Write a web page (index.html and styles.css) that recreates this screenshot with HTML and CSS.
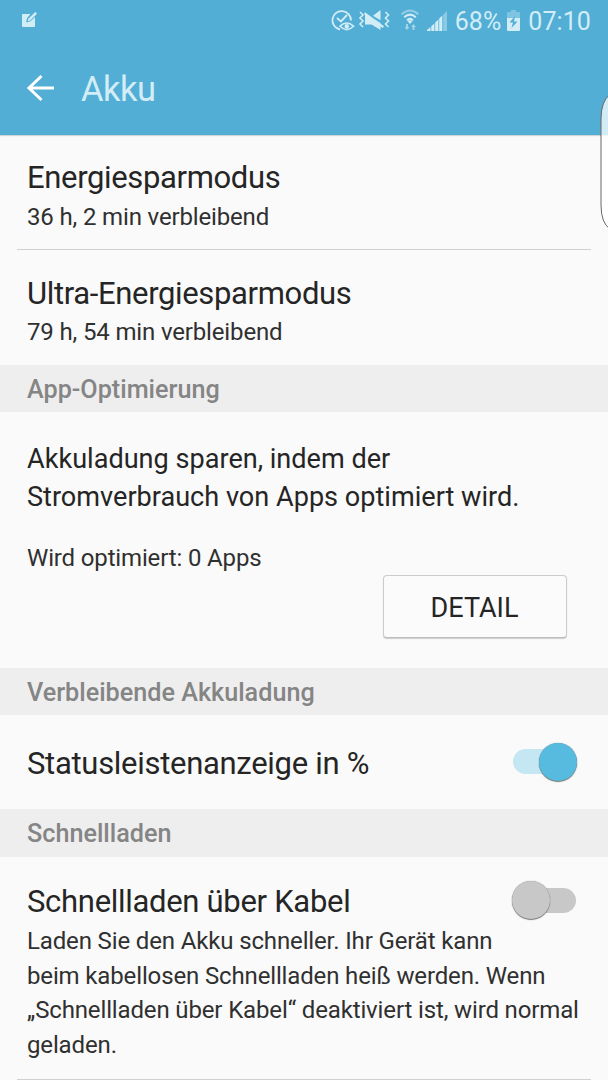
FILE: index.html
```html
<!DOCTYPE html>
<html lang="de">
<head>
<meta charset="utf-8">
<title>Akku</title>
<link rel="stylesheet" href="styles.css">
</head>
<body>
<div class="screen">
  <header class="header">
    <div class="statusbar">
      <svg class="note-icon" width="17" height="17" viewBox="0 0 17 17">
        <path d="M2 2H9.5L6.2 6L5 10.5L9.5 9.3L14 5V14Q14 15 13 15H2Q1 15 1 14V3Q1 2 2 2Z" fill="currentColor"/>
        <path d="M6.7 9.2L7.4 6.7L14.2 0L16 1.8L9.2 8.5Z" fill="currentColor"/>
      </svg>
      <div class="status-right">
        <svg class="status-icons" width="124" height="26" viewBox="328 8 124 26">
          <g fill="none" stroke="currentColor">
            <path d="M340 29.5A9.3 9.3 0 1 1 351 20.5" stroke-width="1.8"/>
            <path d="M337 18L341 21.5L347 15" stroke-width="1.9"/>
            <path d="M340 26.2Q346.8 19.8 353.5 26.2Q346.8 33 340 26.2Z" stroke-width="1.6"/>
            <path d="M360 12L363 15L360 18L363 21L360 24L363 27M385.5 12L388.5 15L385.5 18L388.5 21L385.5 24L388.5 27" stroke-width="1.6"/>
          </g>
          <circle cx="346.8" cy="26.3" r="2.2" fill="currentColor"/>
          <path d="M373 15.8L380.5 10V20.2ZM365 15H368L380.5 23V30L371.5 24.5H365ZM365 12.3L384 26.2L382.8 28L364 14.2Z" fill="currentColor"/>
          <g fill="none" stroke="currentColor" stroke-width="2">
            <path d="M401.5 14.3Q410 6.6 418.5 14.3" opacity=".5"/>
            <path d="M404.2 17.2Q410 12 415.8 17.2M407 20.2Q410 17.5 413 20.2"/>
          </g>
          <path d="M407.5 21L410 24L412.5 21Q410 19.5 407.5 21Z" fill="currentColor"/>
          <path d="M406 24H408V27H409.5L407 30L404.5 27H406ZM412.5 30V27H411L413.5 24L416 27H414.5V30Z" fill="currentColor" opacity=".6"/>
          <path d="M427 31V30L430.5 27V31ZM431.3 31V26.3L434.4 23.5V31ZM435.2 31V22.5L438.4 19.5V31ZM439.2 31V18.5L442.3 15.5V31Z" fill="currentColor"/>
          <path d="M443.2 31V14.7L447 11V31Z" fill="currentColor" opacity=".45"/>
        </svg>
        <span class="percent">68%</span>
        <svg class="battery" width="13" height="21" viewBox="0 0 13 21">
          <path d="M4 0H9V2H12Q13 2 13 3V8H0V3Q0 2 1 2H4Z" fill="currentColor" opacity=".35"/>
          <path d="M0 8H13V20Q13 21 12 21H1Q0 21 0 20Z" fill="currentColor"/>
          <path d="M8 6L2.5 12.5H6L4.5 18L10.5 11.5H7Z" fill="#52aed5"/>
        </svg>
        <span class="clock">07:10</span>
      </div>
    </div>
    <div class="titlebar">
      <svg class="back" width="28" height="28" viewBox="0 0 28 28"><path d="M28 14H3M15.5 2L3 14L15.5 26" fill="none" stroke="#fff" stroke-width="3"/></svg>
      <h1 class="page-title">Akku</h1>
    </div>
  </header>
  <svg class="edge-handle" width="10" height="138" viewBox="0 0 10 138"><path d="M10 1.5Q1 8 1 26V112Q1 130 10 136Z" fill="#fff" fill-opacity=".75"/><path d="M10 1.5Q1 8 1 26V112Q1 130 10 136" fill="none" stroke="#686868" stroke-width="1"/></svg>
  <main>
    <section class="row row-first"><h2 class="row-title">Energiesparmodus</h2><p class="row-sub">36 h, 2 min verbleibend</p></section>
    <hr class="divider">
    <section class="row row-second"><h2 class="row-title">Ultra-Energiesparmodus</h2><p class="row-sub">79 h, 54 min verbleibend</p></section>
    <h3 class="section-title">App-Optimierung</h3>
    <section class="optimize">
      <p class="lead">Akkuladung sparen, indem der<br>Stromverbrauch von Apps optimiert wird.</p>
      <p class="row-sub">Wird optimiert: 0 Apps</p>
      <button class="detail">DETAIL</button>
    </section>
    <h3 class="section-title">Verbleibende Akkuladung</h3>
    <section class="status-row"><h2 class="row-title">Statusleistenanzeige in %</h2><span class="switch on"><i class="thumb"></i></span></section>
    <h3 class="section-title last">Schnellladen</h3>
    <section class="charge">
      <div class="charge-head"><h2 class="row-title">Schnellladen über Kabel</h2><span class="switch off"><i class="thumb"></i></span></div>
      <p class="description">Laden Sie den Akku schneller. Ihr Gerät kann<br>beim kabellosen Schnellladen heiß werden. Wenn<br>„Schnellladen über Kabel“ deaktiviert ist, wird normal<br>geladen.</p>
    </section>
    <hr class="divider">
  </main>
</div>
</body>
</html>
```
FILE: styles.css
```css
* { box-sizing: border-box; }
body { margin: 0; background: #fafafa; color: #252525; font-family: Roboto, sans-serif; }
h1, h2, h3, p { margin: 0; font-weight: 400; white-space: nowrap; }
.screen { position: relative; width: 608px; height: 1080px; overflow: hidden; }
.header { height: 135px; background: #52aed5; color: #d3edf7; box-shadow: 0 1px 1px #d0d4d6; }
.statusbar { height: 42px; display: flex; justify-content: space-between; padding: 0 17px 0 21px; }
.note-icon { margin-top: 12px; }
.status-right { display: flex; }
.status-icons { margin-top: 8px; }
.percent, .clock { font-size: 25px; line-height: 44px; }
.percent { margin-left: 3px; }
.battery { margin: 10px 8px 0 6px; }
.clock { letter-spacing: .1px; }
.titlebar { display: flex; align-items: center; height: 93px; padding: 0 0 0 26px; }
.back { margin: -2px 27px 0 0; }
.page-title { font-size: 34.5px; line-height: 42px; letter-spacing: -.5px; padding-top: 1px; }
.edge-handle { position: absolute; right: -2px; top: 93px; }
.row { padding-left: 27px; }
.row-first { height: 114px; padding-top: 23px; }
.row-second { height: 115px; padding-top: 24px; }
.row-title { font-size: 31px; line-height: 40px; letter-spacing: -.35px; }
.row-sub { font-size: 24px; line-height: 38px; letter-spacing: -.15px; color: #303030; }
.row-second .row-sub { line-height: 37px; }
.divider { height: 1px; margin: 0 17px; border: 0; background: #d0d0d0; }
.section-title { height: 47px; padding-left: 27px; background: #eeeeee; color: #858585; font-size: 25.2px; font-weight: 500; line-height: 50px; }
.optimize { height: 256px; padding: 28px 41.5px 0 27px; display: flex; flex-direction: column; }
.lead { font-size: 27.1px; line-height: 38px; margin-bottom: 23px; }
.detail { align-self: flex-end; width: 184px; height: 63px; margin-top: -2px; padding: 2px 0 0; border: 1px solid #ccc; border-bottom-color: #bcbcbc; border-radius: 4px; background: #fbfbfb; box-shadow: 0 1px 1px #ccc; color: #252525; font: 27px Roboto, sans-serif; }
.status-row { height: 94px; padding: 2px 31px 0 27px; display: flex; align-items: center; justify-content: space-between; }
.status-row .row-title { padding-top: 2px; letter-spacing: -.3px; }
.switch { display: flex; align-items: center; width: 64px; height: 25px; border-radius: 13px; }
.switch.on { justify-content: flex-end; background: #c4e7f3; margin-bottom: 3px; }
.switch.off { background: #c8c8c8; margin-bottom: 4px; }
.thumb { width: 38px; height: 38px; flex: none; border-radius: 50%; box-shadow: 0 1px 1px 0 #777, 0 0 1px #777; }
.on .thumb { background: #57badf; }
.off .thumb { background: #c8c8c8; }
.last { height: 48px; }
.charge { height: 222px; padding: 24px 0 0 27px; }
.charge-head { display: flex; justify-content: space-between; align-items: center; height: 42px; padding-right: 32px; }
.charge .row-title { letter-spacing: -.3px; }
.description { font-size: 24px; line-height: 34.6px; letter-spacing: -.14px; color: #303030; padding-top: 1px; }
```
